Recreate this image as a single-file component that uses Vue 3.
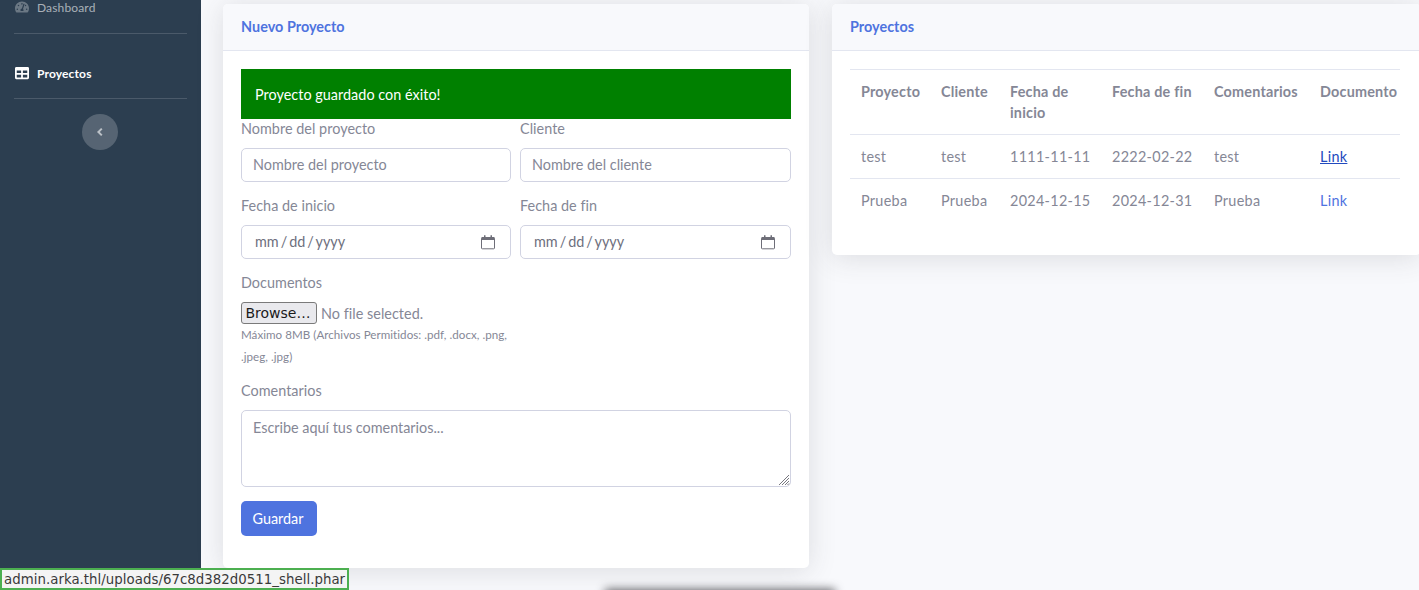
<script setup>
const proyectos = [
  { nombre: 'test', cliente: 'test', inicio: '1111-11-11', fin: '2222-02-22', comentarios: 'test', visited: true },
  { nombre: 'Prueba', cliente: 'Prueba', inicio: '2024-12-15', fin: '2024-12-31', comentarios: 'Prueba', visited: false }
]
</script>

<template>
  <div class="page">
    <aside class="sidebar">
      <a class="nav-item dash">
        <svg class="icon" viewBox="0 0 576 512"><path d="M288 32C128.94 32 0 160.94 0 320c0 52.8 14.25 102.26 39.06 144.8 5.61 9.62 16.3 15.2 27.44 15.2h443c11.14 0 21.83-5.58 27.44-15.2C561.75 422.26 576 372.8 576 320c0-159.06-128.94-288-288-288zm0 64c14.71 0 26.58 10.13 30.32 23.65-1.11 2.26-2.64 4.23-3.45 6.67l-9.22 27.67c-5.13 3.49-10.97 6.01-17.64 6.01-17.67 0-32-14.33-32-32S270.33 96 288 96zM96 384c-17.67 0-32-14.33-32-32s14.33-32 32-32 32 14.33 32 32-14.33 32-32 32zm48-160c-17.67 0-32-14.33-32-32s14.33-32 32-32 32 14.33 32 32-14.33 32-32 32zm246.77-72.41l-61.33 184C343.13 347.33 352 364.54 352 384c0 11.72-3.38 22.55-8.88 32H232.88c-5.5-9.45-8.88-20.28-8.88-32 0-33.94 26.5-61.43 59.9-63.59l61.34-184.01c4.17-12.56 17.73-19.45 30.36-15.17 12.57 4.19 19.35 17.79 15.17 30.36zm14.66 57.2l15.52-46.55c3.47-1.29 7.13-2.23 11.05-2.23 17.67 0 32 14.33 32 32s-14.33 32-32 32c-11.38-.01-20.89-6.28-26.57-15.22zM480 384c-17.67 0-32-14.33-32-32s14.33-32 32-32 32 14.33 32 32-14.33 32-32 32z" /></svg>
        <span>Dashboard</span>
      </a>
      <hr class="divider" />
      <a class="nav-item active">
        <svg class="icon" viewBox="0 0 512 512"><path d="M464 32H48C21.49 32 0 53.49 0 80v352c0 26.51 21.49 48 48 48h416c26.51 0 48-21.49 48-48V80c0-26.51-21.49-48-48-48zM224 416H64v-96h160v96zm0-160H64v-96h160v96zm224 160H288v-96h160v96zm0-160H288v-96h160v96z" /></svg>
        <span>Proyectos</span>
      </a>
      <hr class="divider second" />
      <button class="toggle">
        <svg viewBox="0 0 10 12" width="10" height="12"><path d="M6.800 2.600 3.400 6l3.400 3.400" fill="none" stroke="currentColor" stroke-width="2" /></svg>
      </button>
    </aside>

    <main class="content">
      <section class="card form-card">
        <header class="card-head">Nuevo Proyecto</header>
        <div class="card-body">
          <div class="alert">Proyecto guardado con éxito!</div>
          <div class="grid">
            <div class="field">
              <label>Nombre del proyecto</label>
              <input class="control" placeholder="Nombre del proyecto" />
            </div>
            <div class="field">
              <label>Cliente</label>
              <input class="control" placeholder="Nombre del cliente" />
            </div>
            <div class="field">
              <label>Fecha de inicio</label>
              <div class="control date">
                <span>mm / dd / yyyy</span>
                <svg viewBox="0 0 16 16" width="16" height="16"><path d="M1.500 4.500h13v9.500a.8.8 0 0 1-.8.8H2.300a.8.8 0 0 1-.8-.8z" fill="none" stroke="#6e6e78" /><path d="M1.500 3h13v3h-13zM4 1.200h1.500V3H4zM10.500 1.200H12V3h-1.500z" fill="#6e6e78" /></svg>
              </div>
            </div>
            <div class="field">
              <label>Fecha de fin</label>
              <div class="control date">
                <span>mm / dd / yyyy</span>
                <svg viewBox="0 0 16 16" width="16" height="16"><path d="M1.500 4.500h13v9.500a.8.8 0 0 1-.8.8H2.300a.8.8 0 0 1-.8-.8z" fill="none" stroke="#6e6e78" /><path d="M1.500 3h13v3h-13zM4 1.200h1.500V3H4zM10.500 1.200H12V3h-1.500z" fill="#6e6e78" /></svg>
              </div>
            </div>
          </div>

          <div class="docs">
            <label>Documentos</label>
            <div class="file">
              <button class="browse">Browse…</button>
              <span>No file selected.</span>
            </div>
            <small>Máximo 8MB (Archivos Permitidos: .pdf, .docx, .png,<br />.jpeg, .jpg)</small>
          </div>

          <div class="comments">
            <label>Comentarios</label>
            <div class="area-wrap">
              <textarea class="control area" placeholder="Escribe aquí tus comentarios..."></textarea>
              <svg class="grip" viewBox="0 0 12 12" width="12" height="12"><path d="M1 11 11 1M4 11l7-7M7 11l4-4M9.500 11l1.500-1.500" stroke="#77777f" fill="none" /></svg>
            </div>
          </div>
          <button class="save">Guardar</button>
        </div>
      </section>

      <section class="card list-card">
        <header class="card-head">Proyectos</header>
        <div class="card-body">
          <table>
            <colgroup>
              <col style="width: 80px" />
              <col style="width: 69px" />
              <col style="width: 102px" />
              <col style="width: 102px" />
              <col style="width: 106px" />
              <col style="width: 91px" />
            </colgroup>
            <thead>
              <tr>
                <th>Proyecto</th>
                <th>Cliente</th>
                <th>Fecha de inicio</th>
                <th>Fecha de fin</th>
                <th>Comentarios</th>
                <th>Documento</th>
              </tr>
            </thead>
            <tbody>
              <tr v-for="p in proyectos" :key="p.inicio">
                <td>{{ p.nombre }}</td>
                <td>{{ p.cliente }}</td>
                <td>{{ p.inicio }}</td>
                <td>{{ p.fin }}</td>
                <td>{{ p.comentarios }}</td>
                <td><a :class="p.visited ? 'link-hover' : 'link'">Link</a></td>
              </tr>
            </tbody>
          </table>
        </div>
      </section>
    </main>

    <div class="toast-shadow"></div>
    <div class="status">admin.arka.thl/uploads/67c8d382d0511_shell.phar</div>
  </div>
</template>

<style>
html, body {
  margin: 0;
  overflow: hidden;
  background: #f8f9fc;
}
</style>

<style scoped>
* {
  box-sizing: border-box;
}

.page {
  position: relative;
  display: flex;
  width: 1419px;
  height: 590px;
  overflow: hidden;
  background: #f8f9fc;
  font-family: "Lato", "Liberation Sans", sans-serif;
  font-size: 14.4px;
  letter-spacing: 0.03px;
  color: #858796;
}

.sidebar {
  display: flex;
  flex-direction: column;
  align-items: center;
  flex: 0 0 201px;
  background: #2c3e50;
  padding: 0 14px;
}

.nav-item {
  display: flex;
  align-items: center;
  align-self: stretch;
  gap: 8px;
  padding-left: 1px;
  font-size: 12px;
  letter-spacing: 0.15px;
  height: 16px;
  color: rgba(255, 255, 255, 0.6);
}

.dash {
  margin-top: -1px;
}

.nav-item .icon {
  width: 14px;
  height: 14px;
  fill: rgba(255, 255, 255, 0.3);
}

.nav-item.active {
  margin-top: 31px;
  color: #fff;
  font-weight: 700;
}

.nav-item.active .icon {
  fill: #fff;
}

.divider {
  align-self: stretch;
  height: 1px;
  margin: 18px 0 0;
  border: 0;
  background: rgba(255, 255, 255, 0.15);
}

.divider.second {
  margin-top: 17px;
}

.toggle {
  display: flex;
  align-items: center;
  justify-content: center;
  width: 36px;
  height: 36px;
  margin: 15px 1px 0 0;
  padding: 0;
  border: 0;
  border-radius: 50%;
  background: rgba(255, 255, 255, 0.2);
  color: rgba(255, 255, 255, 0.6);
}

.content {
  display: flex;
  align-items: flex-start;
  gap: 23px;
  flex: 1;
  padding: 4px 0 0 22px;
}

.card {
  background: #fff;
  border-radius: 5px;
  box-shadow: 0 2.400px 28px rgba(58, 59, 69, 0.15);
}

.form-card {
  flex: 0 0 586px;
  height: 564px;
}

.list-card {
  flex: 0 0 589px;
  height: 251px;
}

.card-head {
  display: flex;
  align-items: center;
  height: 47px;
  padding: 0 18px 2px;
  background: #f8f9fc;
  border-bottom: 1px solid #e3e6f0;
  border-radius: 5px 5px 0 0;
  font-weight: 700;
  color: #4e73df;
}

.card-body {
  padding: 18px;
}

.alert {
  display: flex;
  align-items: center;
  height: 50px;
  padding-left: 14px;
  background: #008000;
  color: #fff;
}

.grid {
  display: grid;
  grid-template-columns: 270px 271px;
  column-gap: 9px;
  row-gap: 14px;
}

label {
  display: block;
  height: 21px;
  line-height: 20px;
  margin-bottom: 8px;
}

.control {
  display: block;
  width: 100%;
  height: 34px;
  padding: 0 11px 2px;
  border: 1px solid #d1d3e2;
  border-radius: 5px;
  background: #fff;
  font: inherit;
  color: #6e707e;
  outline: none;
}

.control::placeholder {
  color: #858796;
  opacity: 1;
}

.date {
  display: flex;
  align-items: center;
  justify-content: space-between;
  padding: 0 14px 0 13px;
  color: #6e707e;
  word-spacing: -1.750px;
}

.date span {
  margin-top: -2px;
}

.docs {
  margin-top: 14px;
}

.file {
  display: flex;
  align-items: center;
  gap: 4px;
  height: 22px;
}

.browse {
  width: 76px;
  height: 22px;
  padding: 0 2px 0 0;
  border: 1px solid #7a7a7a;
  border-radius: 3px;
  background: #e9e9ed;
  color: #1b1b1b;
  font-family: "DejaVu Sans", sans-serif;
  font-size: 14px;
}

small {
  display: block;
  font-size: 11.600px;
  line-height: 22px;
}

.comments {
  margin-top: 13px;
}

.area-wrap {
  position: relative;
}

.area {
  height: 77px;
  padding-top: 8px;
  resize: none;
}

.grip {
  position: absolute;
  right: 1px;
  bottom: 1px;
}

.save {
  display: block;
  width: 76px;
  height: 35px;
  margin-top: 14px;
  padding: 0 2px 0 0;
  border: 0;
  border-radius: 5px;
  background: #4e73df;
  color: #fff;
  font: inherit;
}

table {
  width: 550px;
  table-layout: fixed;
  border-collapse: collapse;
}

th, td {
  padding: 11px;
  border-top: 1px solid #e3e6f0;
  text-align: left;
  vertical-align: top;
  line-height: 21px;
}

th {
  font-weight: 700;
  letter-spacing: 0.2px;
}

td {
  letter-spacing: 0.3px;
  white-space: nowrap;
}

.link {
  color: #4e73df;
}

.link-hover {
  color: #224abe;
  text-decoration: underline;
}

.toast-shadow {
  position: absolute;
  left: 605px;
  top: 589px;
  width: 230px;
  height: 14px;
  background: rgba(40, 40, 45, 0.7);
  filter: blur(5px);
}

.status {
  position: absolute;
  left: 0;
  bottom: 0;
  width: 349px;
  height: 22px;
  padding-left: 2px;
  border: 2px solid #4caf50;
  background: #f4f4f4;
  color: #3a3a3a;
  font-family: "DejaVu Sans", sans-serif;
  font-size: 13.330px;
  line-height: 20px;
  white-space: nowrap;
  overflow: hidden;
}
</style>
